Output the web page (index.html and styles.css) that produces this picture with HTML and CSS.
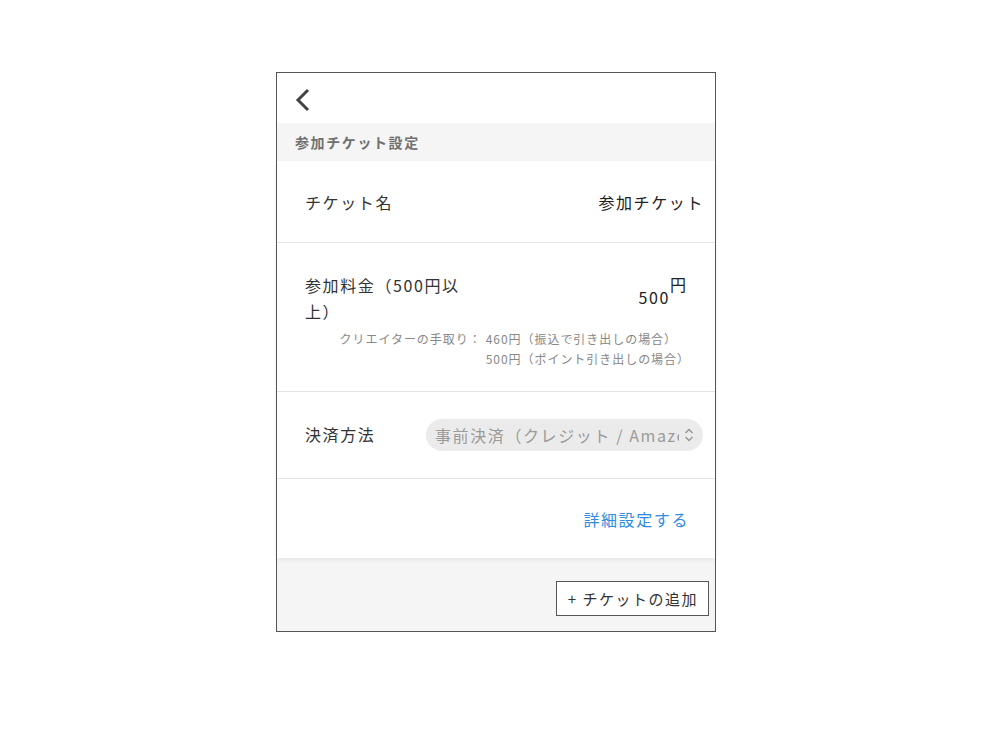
FILE: index.html
```html
<!DOCTYPE html>
<html lang="ja">
<head>
    <meta charset="UTF-8">
    <meta name="viewport" content="width=device-width, initial-scale=1.0">
    <title>参加チケット設定</title>
    <link rel="stylesheet" href="styles.css">
</head>
<body>
    <div class="page">
        <div class="phone">
            <div class="topbar">
                <svg class="back" width="16" height="24" viewBox="0 0 16 24">
                    <path d="M13 2 L3 12 L13 22" fill="none" stroke="#444" stroke-width="3"/>
                </svg>
            </div>

            <div class="section-title">参加チケット設定</div>

            <div class="card">
                <div class="row row-name">
                    <span class="label">チケット名</span>
                    <span class="value">参加チケット</span>
                </div>

                <div class="row row-price">
                    <div class="price-top">
                        <span class="label label-wrap">参加料金（500円以上）</span>
                        <span class="price">500<sup>円</sup></span>
                    </div>
                    <div class="note">
                        <span class="note-head">クリエイターの手取り：</span>
                        <div class="note-lines">
                            <p>460円（振込で引き出しの場合）</p>
                            <p>500円（ポイント引き出しの場合）</p>
                        </div>
                    </div>
                </div>

                <div class="row row-pay">
                    <span class="label">決済方法</span>
                    <div class="select">
                        <span class="select-text">事前決済（クレジット / Amazon Pay）</span>
                        <svg class="select-icon" width="12" height="16" viewBox="0 0 12 16">
                            <path d="M2.5 6 L6 2.5 L9.5 6 M2.5 10 L6 13.5 L9.5 10" fill="none" stroke="#999" stroke-width="1.5"/>
                        </svg>
                    </div>
                </div>

                <div class="row row-link">
                    <a class="link" href="#">詳細設定する</a>
                </div>
            </div>

            <div class="footer">
                <button class="add-btn">+ チケットの追加</button>
            </div>
        </div>
    </div>
</body>
</html>
```

FILE: styles.css
```css
* {
    margin: 0;
    padding: 0;
    box-sizing: border-box;
}

body {
    font-family: 'Noto Sans CJK JP', 'Noto Sans', sans-serif;
    color: #333;
    background: #fff;
    letter-spacing: 0.1em;
}

.page {
    padding: 72px 0 0 276px;
}

.phone {
    width: 440px;
    height: 560px;
    border: 1px solid #555;
    background: #f5f5f5;
    display: flex;
    flex-direction: column;
}

.topbar {
    height: 50px;
    background: #fff;
    display: flex;
    align-items: center;
    padding-left: 18px;
}

.back {
    display: block;
    margin-top: 3px;
}

.section-title {
    height: 38px;
    line-height: 38px;
    padding-left: 18px;
    font-size: 14px;
    font-weight: bold;
    color: #707070;
    background: #f5f5f5;
}

.card {
    background: #fff;
    box-shadow: 0 2px 5px rgba(0, 0, 0, 0.07);
}

.row {
    border-bottom: 1px solid #e3e3e3;
    padding: 0 12px 0 28px;
}

.label {
    font-size: 16px;
    color: #333;
}

.row-name {
    height: 82px;
    display: flex;
    align-items: center;
    justify-content: space-between;
}

.row-name .value {
    font-size: 16px;
    color: #222;
    margin-right: -1px;
}

.row-price {
    height: 149px;
    padding-top: 29px;
    padding-right: 28px;
}

.price-top {
    display: flex;
    justify-content: space-between;
}

.label-wrap {
    width: 166px;
    line-height: 26px;
}

.price {
    font-size: 16px;
    color: #222;
    margin-top: 12px;
    margin-right: 1px;
}

.price sup {
    font-size: 16px;
    vertical-align: 13px;
    line-height: 0;
    letter-spacing: 0;
}

.note {
    display: flex;
    justify-content: flex-end;
    font-size: 12px;
    letter-spacing: 0.08em;
    line-height: 20px;
    color: #888;
    margin-top: 5px;
    margin-right: -3px;
}

.note-head {
    margin-right: 4px;
}

.row-pay {
    height: 87px;
    display: flex;
    align-items: center;
    justify-content: space-between;
}

.row-pay .label {
    margin-top: -3px;
}

.select {
    width: 277px;
    height: 32px;
    border-radius: 16px;
    background: #ebebeb;
    display: flex;
    align-items: center;
    padding: 0 8px 0 9px;
    gap: 4px;
}

.select-text {
    flex: 1;
    font-size: 16px;
    color: #9a9a9a;
    white-space: nowrap;
    overflow: hidden;
}

.select-icon {
    flex-shrink: 0;
}

.row-link {
    height: 79px;
    border-bottom: none;
    display: flex;
    align-items: center;
    justify-content: flex-end;
    padding-right: 28px;
}

.link {
    font-size: 16px;
    color: #2e8de0;
    text-decoration: none;
    margin-right: -2px;
}

.footer {
    flex: 1;
    display: flex;
    justify-content: flex-end;
    align-items: flex-start;
    padding: 23px 6px 0 0;
}

.add-btn {
    font-family: inherit;
    font-size: 15px;
    letter-spacing: 0.1em;
    color: #333;
    background: #fff;
    border: 1px solid #555;
    height: 35px;
    padding: 0 10px 0 11px;
}
```
